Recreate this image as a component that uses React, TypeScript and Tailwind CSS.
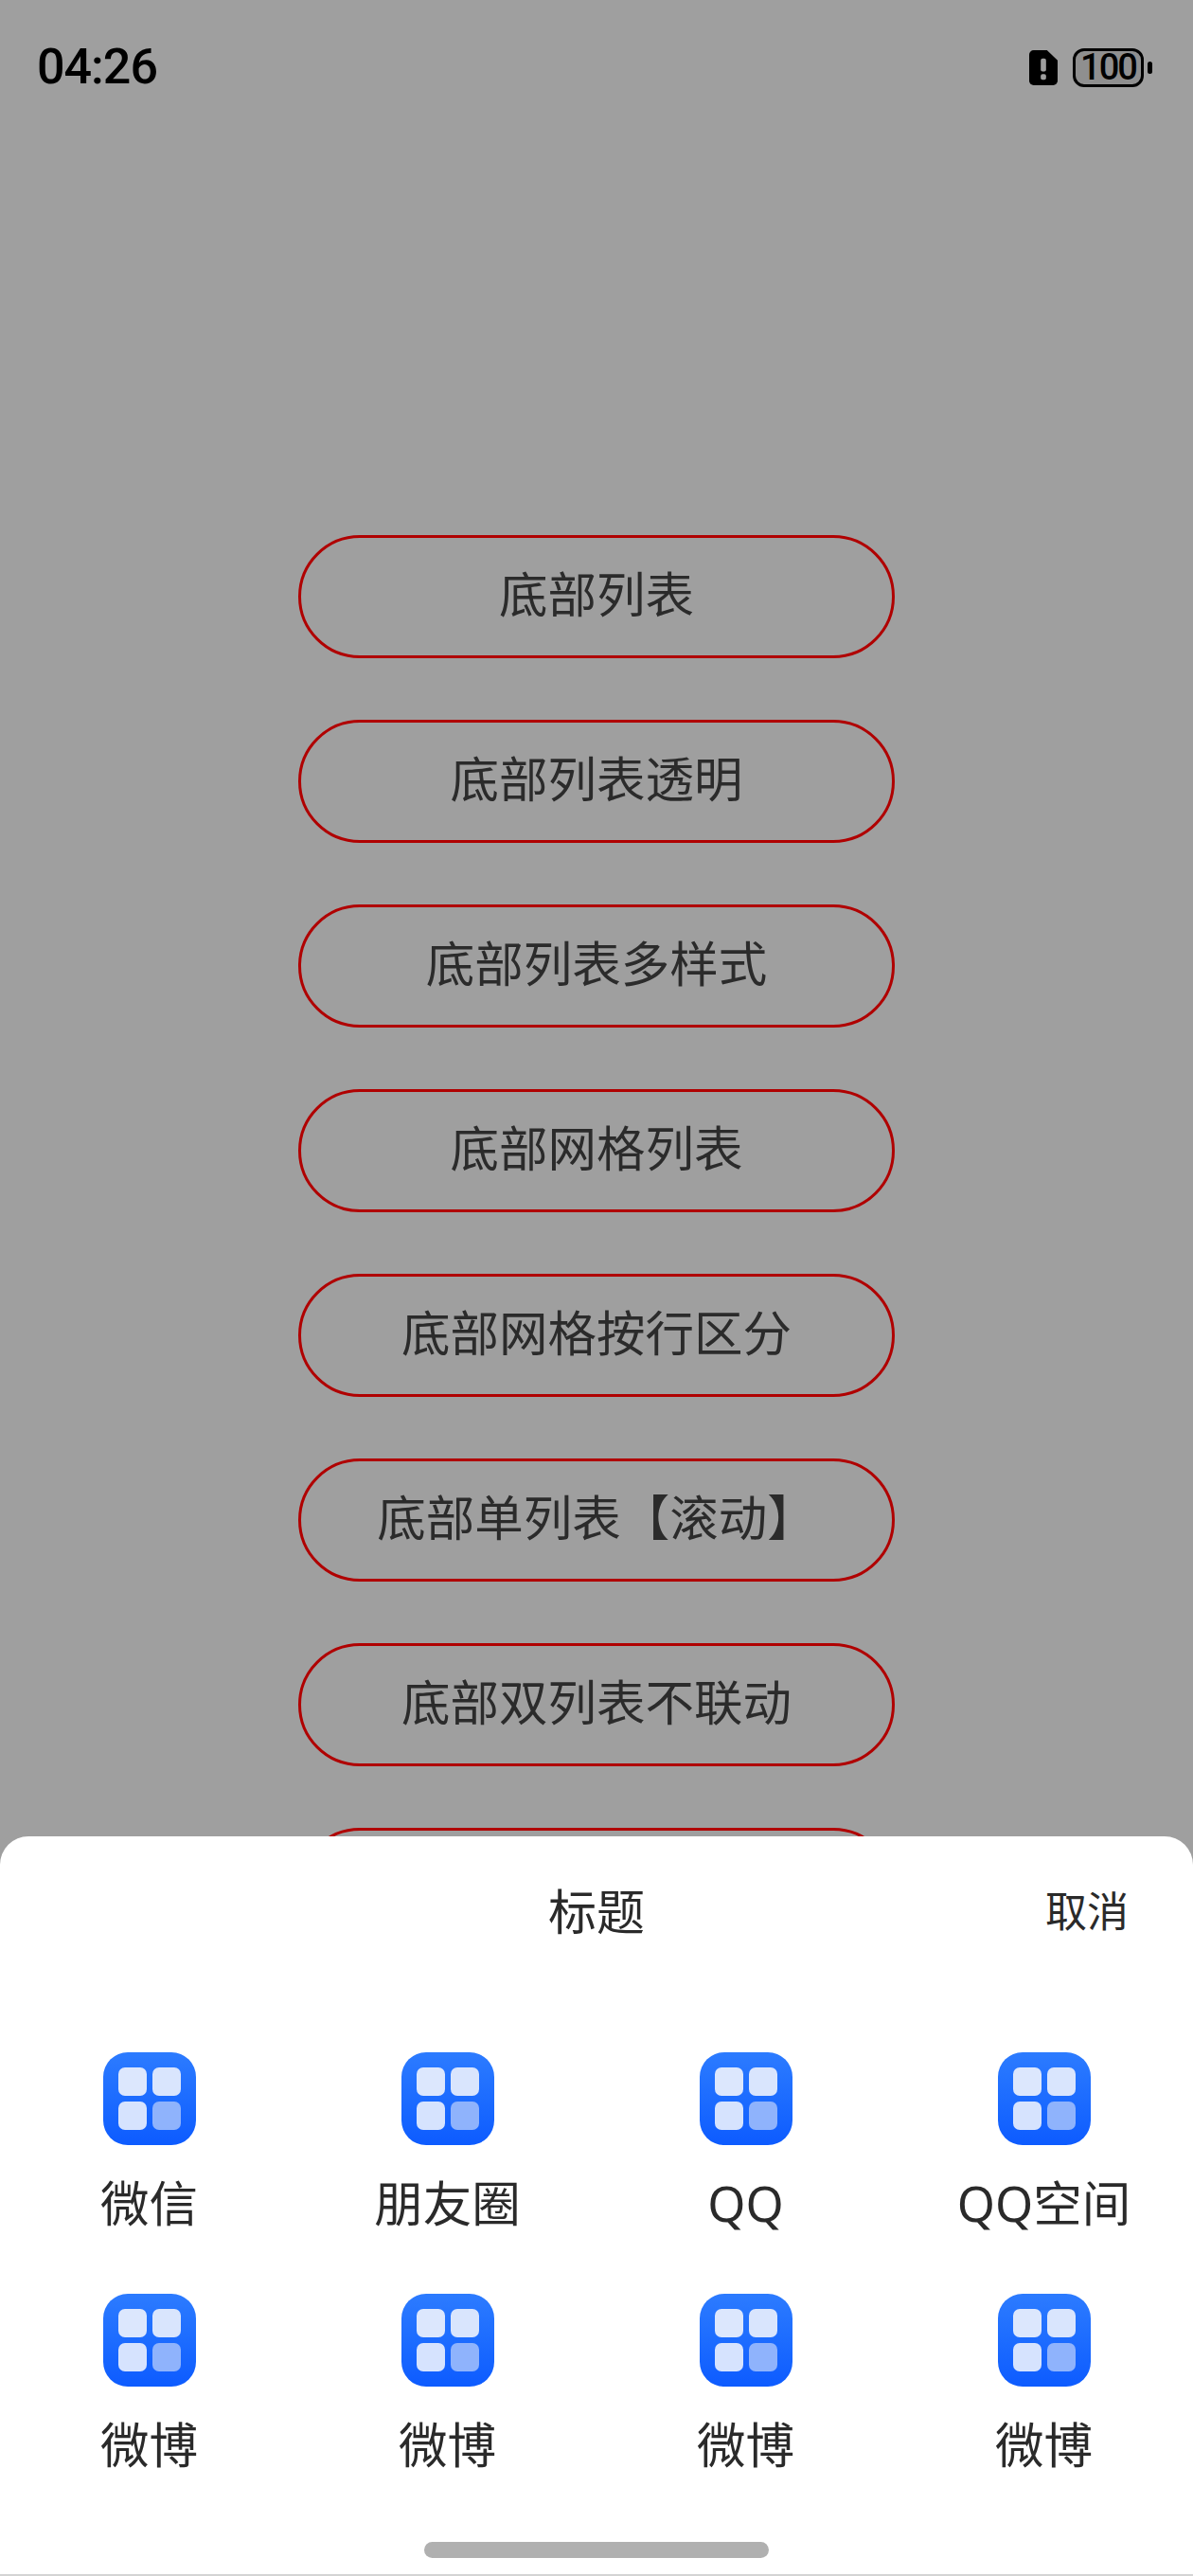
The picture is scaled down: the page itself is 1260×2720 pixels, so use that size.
const buttons = [
  "底部列表",
  "底部列表透明",
  "底部列表多样式",
  "底部网格列表",
  "底部网格按行区分",
  "底部单列表【滚动】",
  "底部双列表不联动",
  "",
];

const items = ["微信", "朋友圈", "QQ", "QQ空间", "微博", "微博", "微博", "微博"];

const font = { fontFamily: '"Noto Sans", "Noto Sans CJK SC", sans-serif' };

function GridIcon() {
  return (
    <div className="grid h-[98px] w-[98px] grid-cols-[30px_30px] content-center justify-center gap-[6px] rounded-[26px] bg-gradient-to-b from-[#2c7bff] to-[#0d5bff]">
      <div className="h-[30px] w-[30px] rounded-[7px] bg-[#dce7fd]" />
      <div className="h-[30px] w-[30px] rounded-[7px] bg-[#d9e5fd]" />
      <div className="h-[30px] w-[30px] rounded-[7px] bg-[#d6e3fe]" />
      <div className="h-[30px] w-[30px] rounded-[7px] bg-[#8fb3fc]" />
    </div>
  );
}

export default function App() {
  return (
    <div
      className="relative h-[2720px] w-[1260px] overflow-hidden bg-[#9f9f9f]"
      style={font}
    >
      <div className="flex h-[142px] items-center justify-between pl-[39px] pr-[43px]">
        <span
          className="text-[52px] font-medium leading-none tracking-[-1px] text-black"
          style={{ fontFamily: '"Roboto", sans-serif' }}
        >
          04:26
        </span>
        <div className="flex items-center gap-[16px]">
          <svg width="30" height="37" viewBox="0 0 32 38" preserveAspectRatio="none">
            <path d="M5 0H20L32 11V33a5 5 0 0 1-5 5H5a5 5 0 0 1-5-5V5a5 5 0 0 1 5-5Z" fill="#000" />
            <rect x="13" y="9" width="6" height="14" rx="2" fill="#9f9f9f" />
            <rect x="13" y="26" width="6" height="6" rx="2" fill="#9f9f9f" />
          </svg>
          <div className="flex items-center gap-[4px]">
            <div className="flex h-[41px] w-[75px] items-center justify-center rounded-[12px] border-[3px] border-black bg-[#8f8f8f]">
              <span
                className="text-[38px] font-medium leading-none tracking-[-2px] text-black"
                style={{ fontFamily: '"Roboto", sans-serif' }}
              >
                100
              </span>
            </div>
            <div className="h-[13px] w-[5px] rounded-full bg-black" />
          </div>
        </div>
      </div>

      <div className="flex flex-col items-center gap-[65px] pt-[423px]">
        {buttons.map((b, i) => (
          <div
            key={i}
            className="flex h-[130px] w-[630px] shrink-0 items-center justify-center rounded-full border-[3px] border-[#b00000] pb-[4px] text-[51.5px] leading-none text-[#2b2b2b]"
          >
            {b}
          </div>
        ))}
      </div>

      <div className="absolute inset-x-0 bottom-0 h-[781px] rounded-t-[30px] bg-white">
        <div className="relative h-[158px]">
          <div className="flex h-full items-center justify-center">
            <span className="text-[51px] leading-none text-[#2a2a2a]">标题</span>
          </div>
          <span className="absolute right-[68px] top-[57px] text-[44px] leading-none text-[#2a2a2a]">取消</span>
        </div>
        <div className="grid grid-cols-4 gap-y-[53px] pt-[70px]">
          {items.map((t, i) => (
            <div key={i} className="flex flex-col items-center">
              <GridIcon />
              <span className="mt-[24px] h-[80px] text-[51.5px] leading-[74px] whitespace-nowrap text-[#2a2a2a]">{t}</span>
            </div>
          ))}
        </div>
        <div className="absolute bottom-[19px] left-[448px] h-[17px] w-[364px] rounded-full bg-[#b0b0b0]" />
        <div className="absolute inset-x-0 bottom-0 h-[2px] bg-[#d4d4d4]" />
      </div>
    </div>
  );
}
